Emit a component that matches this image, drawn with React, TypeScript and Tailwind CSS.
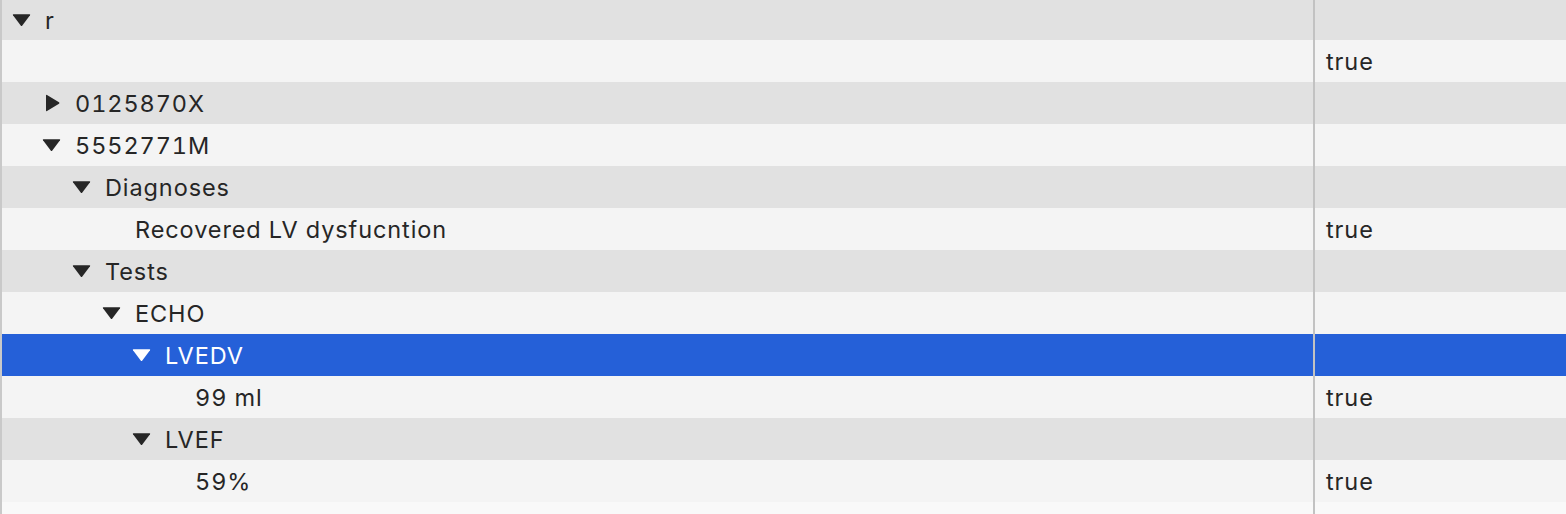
import React from "react";

type Row = {
  level: number;
  label: string;
  value?: string;
  toggle?: "open" | "closed";
  selected?: boolean;
};

const rows: Row[] = [
  { level: 0, label: "r", toggle: "open" },
  { level: 1, label: "", value: "true" },
  { level: 1, label: "0125870X", toggle: "closed" },
  { level: 1, label: "5552771M", toggle: "open" },
  { level: 2, label: "Diagnoses", toggle: "open" },
  { level: 3, label: "Recovered LV dysfucntion", value: "true" },
  { level: 2, label: "Tests", toggle: "open" },
  { level: 3, label: "ECHO", toggle: "open" },
  { level: 4, label: "LVEDV", toggle: "open", selected: true },
  { level: 5, label: "99 ml", value: "true" },
  { level: 4, label: "LVEF", toggle: "open" },
  { level: 5, label: "59%", value: "true" },
];

const Disclosure = ({ open, color }: { open: boolean; color: string }) =>
  open ? (
    <svg width="19" height="14" viewBox="0 0 19 14" className="block">
      <path
        d="M1.5 1.2 H17.5 Q18.6 1.2 18 2.2 L10.3 12.6 Q9.5 13.6 8.7 12.6 L1 2.2 Q0.4 1.2 1.5 1.2 Z"
        fill={color}
      />
    </svg>
  ) : (
    <svg width="15" height="18" viewBox="0 0 15 18" className="block">
      <path
        d="M1 1.6 Q1 0.4 2 1 L14 8.2 Q15 9 14 9.8 L2 17 Q1 17.6 1 16.4 Z"
        fill={color}
      />
    </svg>
  );

const App = () => {
  return (
    <div
      className="w-[1566px] h-[514px] overflow-hidden bg-[#f9f9f9] flex text-[#262626] tabular-nums"
      style={{ fontFamily: "Inter, 'Noto Sans', sans-serif" }}
    >
      {/* LEFT EDGE */}
      <div className="w-[2px] shrink-0 bg-[#c9c9c9]" />
      <div className="flex-1 flex flex-col">
        {rows.map((row, i) => {
          const bg = row.selected
            ? "bg-[#2560d8] text-white"
            : i % 2 === 0
            ? "bg-[#e1e1e1]"
            : "bg-[#f4f4f4]";
          return (
            <div
              key={i}
              className={`${bg} ${i === 0 ? "h-[40px]" : "h-[42px]"} flex shrink-0`}
            >
              {/* NAME COLUMN */}
              <div className="w-[1311px] shrink-0 flex items-center text-[23.5px] tracking-[0.9px]">
                <div
                  className="shrink-0"
                  style={{ width: 10 + row.level * 30 }}
                />
                <div className="w-[33px] shrink-0 flex items-center">
                  {row.toggle === "open" && (
                    <Disclosure open color={row.selected ? "#ffffff" : "#262626"} />
                  )}
                  {row.toggle === "closed" && (
                    <div className="pl-[3px]">
                      <Disclosure open={false} color="#262626" />
                    </div>
                  )}
                </div>
                <span className="pt-[1px]">{row.label}</span>
              </div>
              {/* DIVIDER */}
              <div className="w-[2px] shrink-0 bg-[#c2c2c2]" />
              {/* VALUE COLUMN */}
              <div className="flex-1 flex items-center pl-[11px] text-[23.5px] tracking-[0.9px]">
                <span className="pt-[1px]">{row.value}</span>
              </div>
            </div>
          );
        })}
        <div className="flex flex-1">
          <div className="w-[1311px] shrink-0" />
          <div className="w-[2px] shrink-0 bg-[#c2c2c2]" />
        </div>
      </div>
    </div>
  );
};

export default App;
